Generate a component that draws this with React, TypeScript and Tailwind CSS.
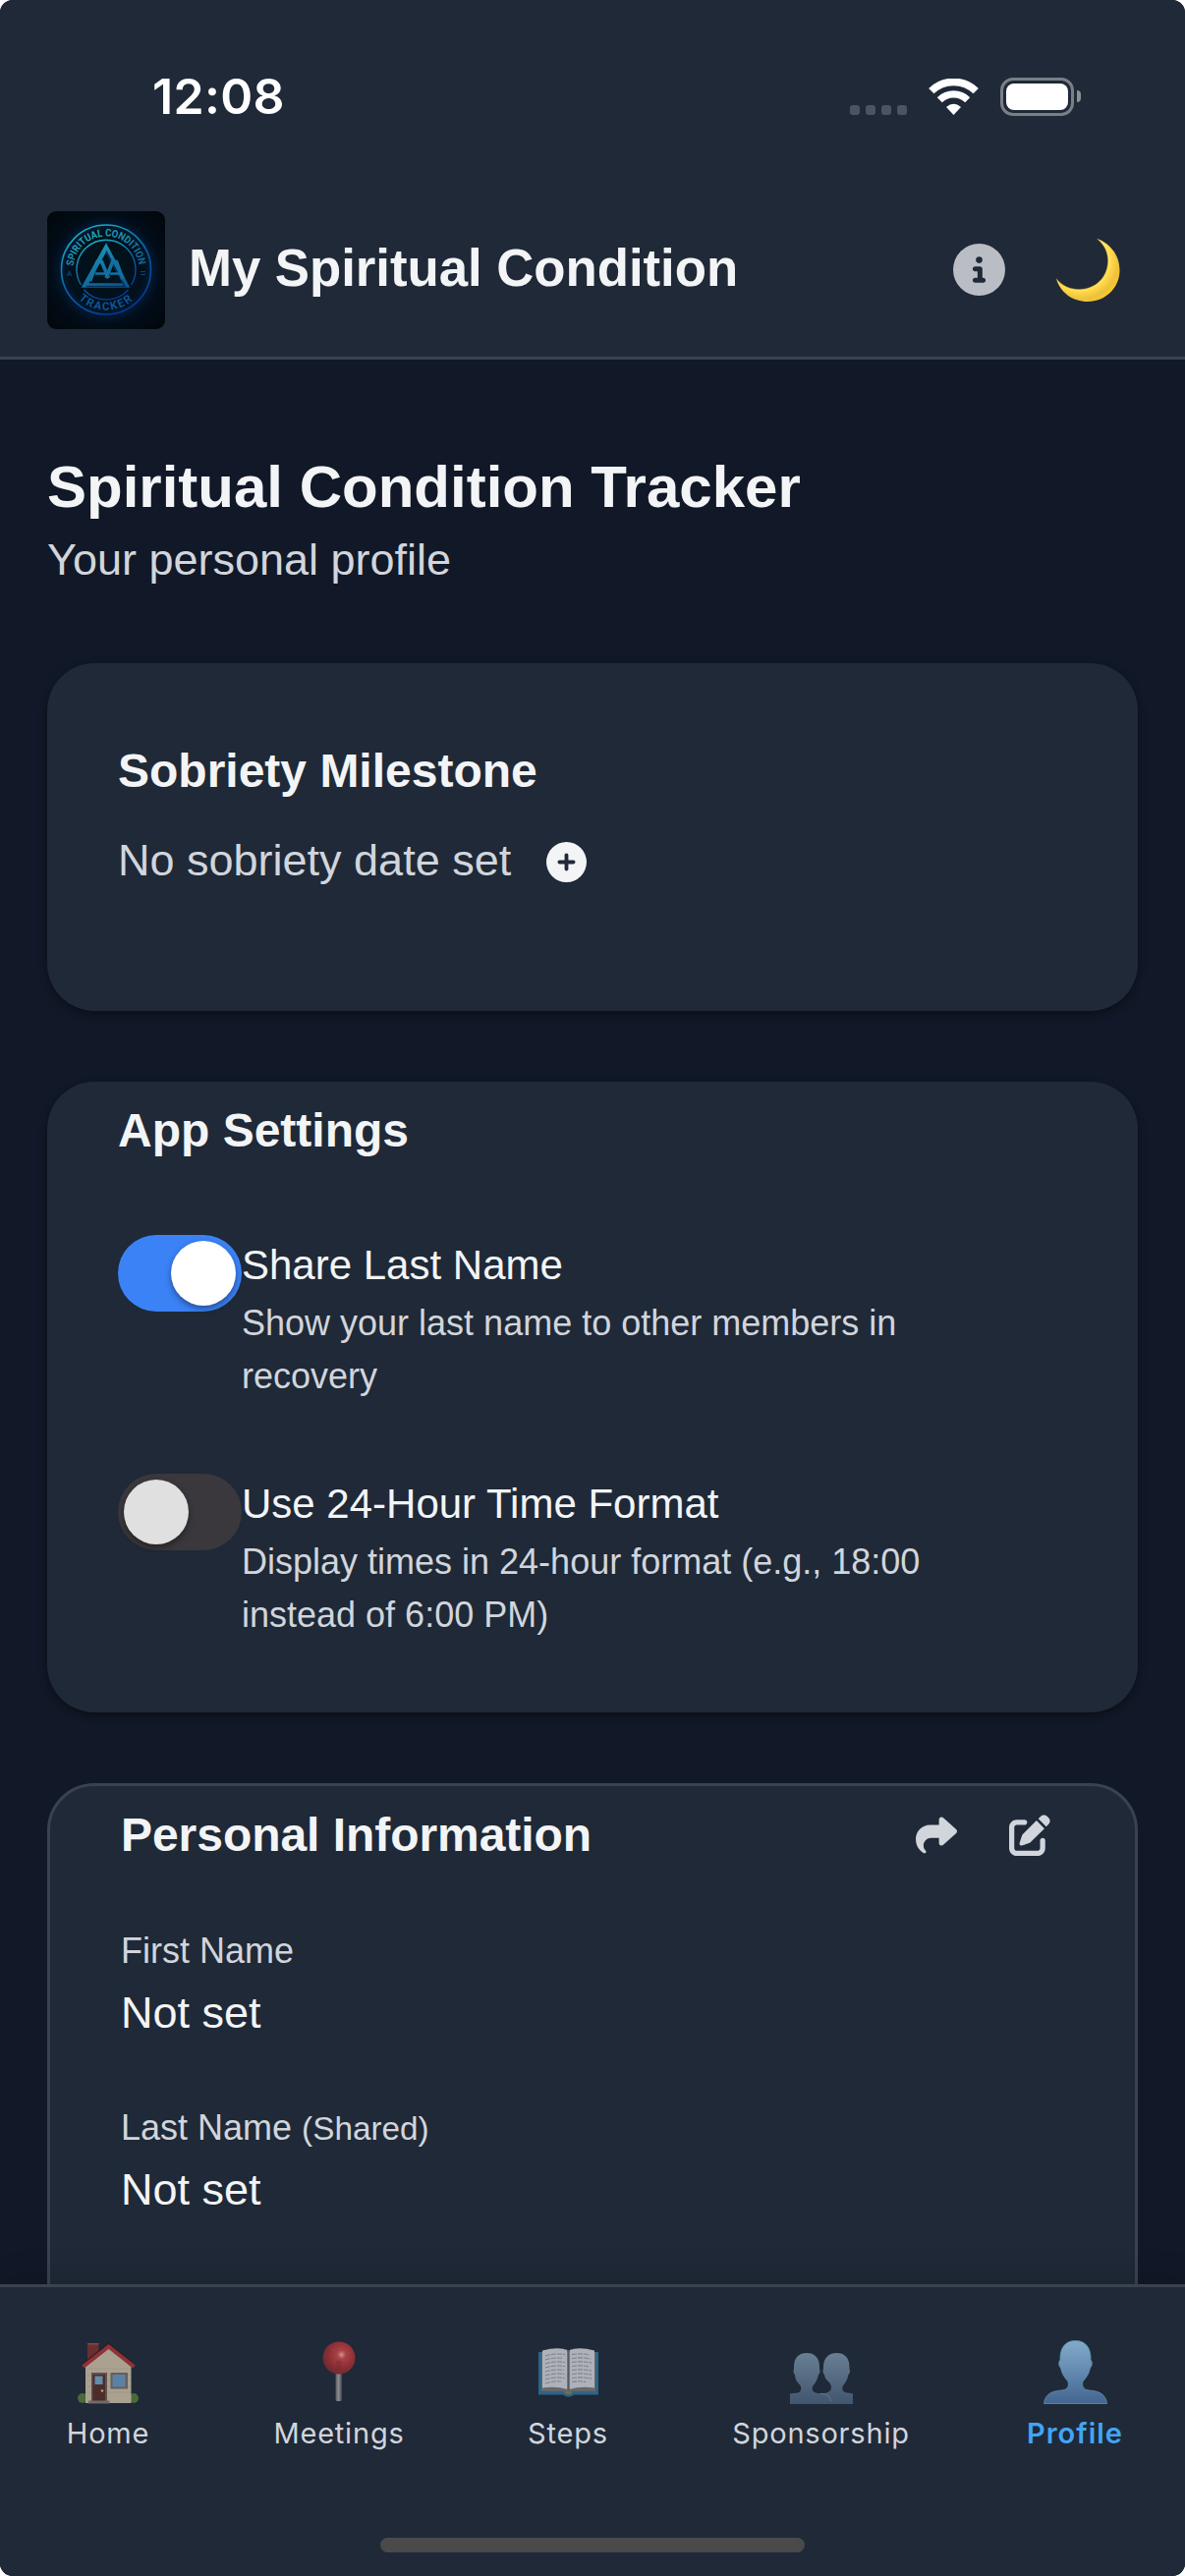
import React from "react";
import { FaCircleInfo, FaCirclePlus, FaPenToSquare, FaShare } from "react-icons/fa6";

function Logo() {
  return (
    <svg viewBox="0 0 120 120" className="h-[120px] w-[120px] shrink-0 rounded-[9px]">
      <defs>
        <radialGradient id="logoBg" cx="0.5" cy="0.5" r="0.7">
          <stop offset="0" stopColor="#01141c" />
          <stop offset="0.6" stopColor="#020e1a" />
          <stop offset="1" stopColor="#01060b" />
        </radialGradient>
        <linearGradient id="ring" x1="0.25" y1="0" x2="0.75" y2="1">
          <stop offset="0" stopColor="#18b8cc" />
          <stop offset="0.45" stopColor="#0a6ba8" />
          <stop offset="1" stopColor="#062f92" />
        </linearGradient>
        <linearGradient id="ink" gradientUnits="userSpaceOnUse" x1="45" y1="14" x2="80" y2="90">
          <stop offset="0" stopColor="#24b8c6" />
          <stop offset="0.5" stopColor="#1578a4" />
          <stop offset="1" stopColor="#0a4588" />
        </linearGradient>
        <filter id="halo" x="-30%" y="-30%" width="160%" height="160%">
          <feGaussianBlur stdDeviation="4" />
        </filter>
        <path id="arcTop" d="M26.500 56.500 A33.600 33.600 0 0 1 93.500 56.500" />
        <path id="arcBottom" d="M22 75 A41 41 0 0 0 98 75" />
      </defs>
      <rect width="120" height="120" fill="url(#logoBg)" />
      <circle cx="60" cy="60" r="46" fill="none" stroke="#0a3f92" strokeOpacity="0.45" strokeWidth="4" filter="url(#halo)" />
      <circle cx="60" cy="59.500" r="45.500" fill="none" stroke="url(#ring)" strokeWidth="1.600" />
      <path d="M34.500 75 A30 30 0 1 1 85.500 75 M37.500 80 A30.300 30.300 0 0 0 82.500 80" fill="none" stroke="url(#ring)" strokeWidth="1.400" />
      <path d="M60 37 L80.500 75.500 H38.500 Z" fill="none" stroke="url(#ink)" strokeWidth="4.600" />
      <path d="M60 40.500 L79 76.500 H40" fill="none" stroke="#06305c" strokeWidth="1.600" />
      <path d="M43.500 71 L51 51.500 H55.500 L62.500 68" fill="none" stroke="url(#ink)" strokeWidth="3.600" />
      <path d="M60 68 L66.500 51.500 H70.500 L77 69" fill="none" stroke="#136f9f" strokeWidth="3.600" />
      <path d="M49 63.500 H59 M64 63.500 H74" fill="none" stroke="#15709f" strokeWidth="2.600" />
      <text fontFamily="Roboto, sans-serif" fontSize="10.500" fontWeight="700" fill="url(#ink)">
        <textPath href="#arcTop" startOffset="0.500" textLength="98" lengthAdjust="spacingAndGlyphs">
          SPIRITUAL CONDITION
        </textPath>
      </text>
      <text fontFamily="Roboto, sans-serif" fontSize="11.500" fontWeight="700" fill="#0c5596" textAnchor="middle" letterSpacing="1.600">
        <textPath href="#arcBottom" startOffset="50%">TRACKER</textPath>
      </text>
      <text x="20" y="65.500" fontFamily="Roboto, sans-serif" fontSize="8" fill="#0d5d85">A</text>
      <path d="M95 61.500 H100 M95 64.500 H100" stroke="#0a3f85" strokeWidth="1.100" />
    </svg>
  );
}

function Wifi() {
  return (
    <svg viewBox="0 0 51 37" className="h-[37px] w-[51px]" fill="none" stroke="#fff">
      <path d="M2.800 12.600 A32.500 32.500 0 0 1 48.200 12.600" strokeWidth="7.600" />
      <path d="M11.300 21.700 A20.300 20.300 0 0 1 39.700 21.700" strokeWidth="7.200" />
      <path d="M25.500 37 L18 29 Q25.500 22.500 33 29 Z" fill="#fff" stroke="none" />
    </svg>
  );
}

function Battery() {
  return (
    <div className="flex items-center gap-[3px]">
      <div className="h-[39px] w-[75px] rounded-[13px] border-[3px] border-[#7a7f87] p-[3px]">
        <div className="h-full w-full rounded-[8px] bg-white" />
      </div>
      <div className="h-[12px] w-[4px] rounded-r-full bg-[#8b9097]" />
    </div>
  );
}

function Moon() {
  return (
    <svg viewBox="0 0 65 64" className="h-[64px] w-[65px]">
      <defs>
        <radialGradient id="moon" gradientUnits="userSpaceOnUse" cx="24" cy="22" r="44">
          <stop offset="0.62" stopColor="#fff07a" />
          <stop offset="0.74" stopColor="#ffd746" />
          <stop offset="0.9" stopColor="#ecc040" />
          <stop offset="1" stopColor="#f8c925" />
        </radialGradient>
      </defs>
      <path d="M41.500 0 C56 5 64.500 18 64.500 32 C64.500 50 50 64 32 64 C17 64 4 55 0 40.500 C6 48 14 51.500 23 51.500 C40 51.500 52.500 39 52.500 22.500 C52.500 13.500 49 6.500 41.500 0 Z" fill="url(#moon)" />
      <path d="M0 40.500 C6 48 14 51.500 23 51.500 C40 51.500 52.500 39 52.500 22.500 C52.500 13.500 49 6.500 41.500 0" fill="none" stroke="#b5781c" strokeOpacity="0.5" strokeWidth="1" />
    </svg>
  );
}

function House() {
  return (
    <svg viewBox="0 0 62 63" className="h-[63px] w-[62px]">
      <circle cx="5" cy="57" r="5" fill="#4a6a3c" />
      <circle cx="57" cy="57" r="5" fill="#4a6a3c" />
      <rect x="10" y="1" width="11.500" height="20" fill="#6b2e31" />
      <rect x="10" y="1" width="11.500" height="1.500" fill="#8a4744" />
      <path d="M8 25 L31.500 5 L54.500 25 V62 H8 Z" fill="#aba191" />
      <path d="M9 27 H54 M9 33 H54 M9 39 H54 M9 45 H54 M9 51 H54" stroke="#9c9285" strokeWidth="0.700" />
      <path d="M5 23 L31.500 1.500 L58 23" fill="none" stroke="#2c1d22" strokeWidth="2" />
      <path d="M5.500 25 L31.500 4.500 L57.500 25" fill="none" stroke="#8f3337" strokeWidth="4" />
      <rect x="14" y="31" width="16" height="29" fill="#5d5250" />
      <rect x="15.500" y="33" width="12.500" height="27" fill="#4d2d2b" />
      <rect x="17.500" y="34.500" width="8" height="8.500" fill="#648cab" />
      <circle cx="25" cy="49.500" r="1.300" fill="#c9a453" />
      <rect x="33.500" y="31" width="17.500" height="16.500" fill="#665e5b" />
      <rect x="35.500" y="33" width="13" height="12.500" fill="#5a82a6" />
      <rect x="11" y="59.500" width="21.500" height="3" fill="#716b69" />
    </svg>
  );
}

function Pin() {
  return (
    <svg viewBox="0 0 34 62" className="h-[62px] w-[34px]">
      <defs>
        <radialGradient id="ball" cx="0.58" cy="0.4" r="0.6">
          <stop offset="0" stopColor="#cf918d" />
          <stop offset="0.22" stopColor="#a94247" />
          <stop offset="0.65" stopColor="#8e2f36" />
          <stop offset="1" stopColor="#6e2a31" />
        </radialGradient>
        <linearGradient id="stick" x1="0" y1="0" x2="1" y2="0">
          <stop offset="0" stopColor="#54575e" />
          <stop offset="0.45" stopColor="#8b8d91" />
          <stop offset="1" stopColor="#45464c" />
        </linearGradient>
      </defs>
      <rect x="13.500" y="30" width="6.500" height="31" rx="1.500" fill="url(#stick)" />
      <circle cx="17" cy="17" r="16.500" fill="url(#ball)" />
      <path d="M14 21 Q17 18 20 21 L19 32 H15 Z" fill="#7d2930" opacity="0.5" />
    </svg>
  );
}

function Book() {
  return (
    <svg viewBox="0 0 61 50" className="h-[50px] w-[61px]">
      <path d="M0 4 H61 V47.500 H36 Q30.500 52 25 47.500 H0 Z" fill="#2c6487" />
      <path d="M3 4 H58 V44 H34 Q30.500 48 27 44 H3 Z" fill="#67686c" />
      <path d="M27 44.500 Q30.500 48 34 44.500" fill="none" stroke="#7d7434" strokeWidth="2" />
      <path d="M4 2.500 Q20 -1.500 29.500 2 V42 Q18 38.500 4 40.500 Z" fill="#aeb1b9" />
      <path d="M57 2.500 Q41 -1.500 31.500 2 V42 Q43 38.500 57 40.500 Z" fill="#aeb1b9" />
      <path d="M30.500 2 V43" stroke="#565a62" strokeWidth="2" />
      <path d="M7 8 Q17 5 27 6.500 M7 12 Q17 9 25 10.500 M7 16 Q17 13 27 14.500 M7 20 Q17 17 27 18.500 M7 24 Q17 21 26 22.500 M7 28 Q17 25 27 26.500 M7 32 Q17 29 27 30.500 M7 36 Q17 33 23 34 M34 6.500 Q44 5 52 7 M34 10.500 Q44 9 53 11 M34 14.500 Q44 13 54 15 M34 18.500 Q44 17 51 19 M34 22.500 Q44 21 54 23 M34 26.500 Q44 25 54 27 M34 30.500 Q44 29 54 31 M34 34.500 Q42 33 48 34.500" fill="none" stroke="#7f828a" strokeWidth="1.100" strokeDasharray="5 1" />
    </svg>
  );
}

function Pair() {
  return (
    <svg viewBox="0 0 64 52" className="h-[52px] w-[64px]">
      <defs>
        <linearGradient id="pair" gradientUnits="userSpaceOnUse" x1="0" y1="0" x2="0" y2="52">
          <stop offset="0" stopColor="#697f93" />
          <stop offset="1" stopColor="#41566e" />
        </linearGradient>
      </defs>
      <path d="M47.500 0 C56.500 0 61 6 60.500 16 C61.500 18 61 21 59.500 22 C58.500 27 56.500 30 53.500 34 C53 38 54 40 58 40.500 C61 41 63 41 64 41.500 V52 H32 V41.500 C38 41 42 39 42 35 C42 33 41 31 40 30 C37 27 35.500 26 35 22 C33.500 21 33 18 34 16 C33.500 6 38.500 0 47.500 0 Z" fill="url(#pair)" />
      <path d="M17 0 C26 0 30.500 6 30 16 C31 18 30.500 21 29 22 C28 27 26 30 23 34 C22 38 23 40.500 29 41 C37 41.500 41 44 41.500 52 H0 V41.500 C2 40.500 9 41.500 10.500 39 C11.500 37 11.500 35 10.500 33 C6.500 29 5.500 27 5 22 C3.500 21 3 18 4 16 C3.500 6 8 0 17 0 Z" fill="url(#pair)" />
      <path d="M31 41.200 C37 41.700 40.500 43.500 41.500 49" fill="none" stroke="#5d7d93" strokeWidth="1" />
    </svg>
  );
}

function Person() {
  return (
    <svg viewBox="0 0 65 65" className="h-[65px] w-[65px]">
      <defs>
        <linearGradient id="person" x1="0" y1="0" x2="0" y2="1">
          <stop offset="0" stopColor="#82abca" />
          <stop offset="0.5" stopColor="#6389b0" />
          <stop offset="1" stopColor="#43658f" />
        </linearGradient>
      </defs>
      <path d="M32.500 0.500 C43 0.500 48.500 8 48 20 C50 22 49.500 27 47.500 28 C46.500 34 43.500 38 40 42 C39 47 40 50 46 51 C58 51.500 63.500 56 64.500 64.500 H0.500 C1.500 56 7 51.500 19 51 C25 50 26 47 25 42 C21.500 38 18.500 34 17.500 28 C15.500 27 15 22 17 20 C16.500 8 22 0.500 32.500 0.500 Z" fill="url(#person)" stroke="#5f92ab" strokeWidth="0.800" />
    </svg>
  );
}

function Toggle({ on }: { on: boolean }) {
  return (
    <div className={on ? "flex h-[78px] w-[126px] shrink-0 justify-end rounded-full bg-[#3b82f6] p-[6px]" : "flex h-[78px] w-[126px] shrink-0 rounded-full bg-[#3a383c] p-[6px]"}>
      <div className={on ? "h-[66px] w-[66px] rounded-full bg-white shadow-[0_3px_6px_rgba(0,0,0,0.4)]" : "h-[66px] w-[66px] rounded-full bg-[#e0e0e0] shadow-[0_3px_6px_rgba(0,0,0,0.4)]"} />
    </div>
  );
}

function Setting({ on, title, text }: { on: boolean; title: string; text: string }) {
  return (
    <div className="flex items-start">
      <Toggle on={on} />
      <div className="w-[720px] pt-[4px]">
        <div className="text-[42px] leading-[54px] text-gray-100">{title}</div>
        <div className="mt-[5px] text-[36px] leading-[54px] text-gray-300">{text}</div>
      </div>
    </div>
  );
}

const tabs = [
  { label: "Home", icon: <House />, box: "w-[82px]" },
  { label: "Meetings", icon: <Pin />, box: "w-[130px]" },
  { label: "Steps", icon: <Book />, box: "w-[78px]" },
  { label: "Sponsorship", icon: <Pair />, box: "w-[179px]" },
  { label: "Profile", icon: <Person />, box: "w-[80px]" },
];

export default function App() {
  return (
    <div className="h-[2622px] w-[1206px] bg-white">
      <div className="flex h-full flex-col overflow-hidden rounded-[13px] bg-[#111827] font-['Liberation_Sans',Arial,sans-serif]">
        <header className="h-[366px] shrink-0 border-b-[3px] border-[#3b424f] bg-[#1f2937]">
          <div className="mt-[68px] flex h-[60px] items-center justify-between pr-[106px] pl-[155px]">
            <span className="font-[Inter,sans-serif] text-[50px] leading-[60px] font-semibold tracking-[0.3px] text-white">12:08</span>
            <div className="flex items-center gap-[22px]">
              <div className="mt-[27px] flex gap-[6px]">
                {[0, 1, 2, 3].map((i) => (
                  <div key={i} className="h-[10px] w-[10px] rounded-[3px] bg-[#4c545f]" />
                ))}
              </div>
              <Wifi />
              <Battery />
            </div>
          </div>
          <div className="mt-[87px] flex h-[120px] items-center pr-[66px] pl-12">
            <Logo />
            <h1 className="mb-[4px] ml-6 flex-1 text-[52.8px] leading-[64px] font-bold tracking-[-0.05px] whitespace-nowrap text-gray-100">My Spiritual Condition</h1>
            <FaCircleInfo className="mr-[52px] mb-[2px] h-[53px] w-[53px] text-[#babec4]" />
            <Moon />
          </div>
        </header>

        <main className="min-h-0 flex-1 overflow-hidden px-12 pt-[94px]">
          <h2 className="text-[60px] leading-[72px] font-bold text-gray-100">Spiritual Condition Tracker</h2>
          <p className="mt-2 text-[45px] leading-[60px] text-gray-300">Your personal profile</p>

          <section className="mt-[75px] h-[354px] rounded-[48px] bg-[#1f2937] px-[72px] pt-[80px] shadow-[0_3px_9px_rgba(0,0,0,0.4)]">
            <h3 className="text-[48px] leading-[60px] font-bold text-gray-100">Sobriety Milestone</h3>
            <div className="mt-[31px] flex items-center gap-[36px]">
              <span className="text-[45px] leading-[60px] text-gray-300">No sobriety date set</span>
              <FaCirclePlus className="mt-[2px] h-[41px] w-[41px] text-gray-100" />
            </div>
          </section>

          <section className="mt-[72px] h-[642px] rounded-[48px] bg-[#1f2937] px-[72px] pt-[20px] shadow-[0_3px_9px_rgba(0,0,0,0.4)]">
            <h3 className="text-[48px] leading-[60px] font-bold text-gray-100">App Settings</h3>
            <div className="mt-[76px] flex flex-col gap-[72px]">
              <Setting on title="Share Last Name" text="Show your last name to other members in recovery" />
              <Setting on={false} title="Use 24-Hour Time Format" text="Display times in 24-hour format (e.g., 18:00 instead of 6:00 PM)" />
            </div>
          </section>

          <section className="mt-[72px] h-[700px] rounded-[48px] border-[3px] border-[#3b424f] bg-[#1f2937] px-[72px] pt-[20px]">
            <div className="flex items-center pr-[14px]">
              <h3 className="flex-1 text-[48px] leading-[60px] font-bold tracking-[-0.05px] text-gray-100">Personal Information</h3>
              <FaShare className="mr-[53px] h-[42px] w-[42px] text-gray-300" />
              <FaPenToSquare className="h-[42px] w-[42px] text-gray-300" />
            </div>
            <div className="mt-[61px] text-[36px] leading-[54px] text-gray-300">First Name</div>
            <div className="mt-[6px] text-[45px] leading-[60px] text-gray-100">Not set</div>
            <div className="mt-[60px] h-[54px] text-[36px] leading-[54px] text-gray-300">
              Last Name <span className="text-[33.3px]">(Shared)</span>
            </div>
            <div className="mt-[6px] text-[45px] leading-[60px] text-gray-100">Not set</div>
          </section>
        </main>

        <nav className="relative flex h-[297px] shrink-0 flex-col border-t-[3px] border-[#3b424f] bg-[#1f2937] pt-[54px] shadow-[0_-6px_30px_rgba(0,0,0,0.12)]">
          <div className="flex gap-[129px] pl-[69px]">
            {tabs.map((t) => (
              <div key={t.label} className={t.box}>
                <div className="flex flex-col items-center">
                  <div className={t.label === "Meetings" ? "flex h-[65px] items-start pt-[1px]" : t.label === "Steps" ? "flex h-[65px] items-start pt-[8px]" : "flex h-[65px] items-end"}>{t.icon}</div>
                  <span className={t.label === "Profile" ? "mt-[12px] font-[Inter,sans-serif] text-[29px] leading-[36px] font-semibold tracking-[1px] whitespace-nowrap text-[#42a5f5]" : "mt-[12px] font-[Inter,sans-serif] text-[29px] leading-[36px] tracking-[0.8px] whitespace-nowrap text-gray-300"}>
                    {t.label}
                  </span>
                </div>
              </div>
            ))}
          </div>
          <div className="mx-auto mt-[88px] h-[15px] w-[432px] rounded-full bg-[#4a4a4a]" />
        </nav>
      </div>
    </div>
  );
}
